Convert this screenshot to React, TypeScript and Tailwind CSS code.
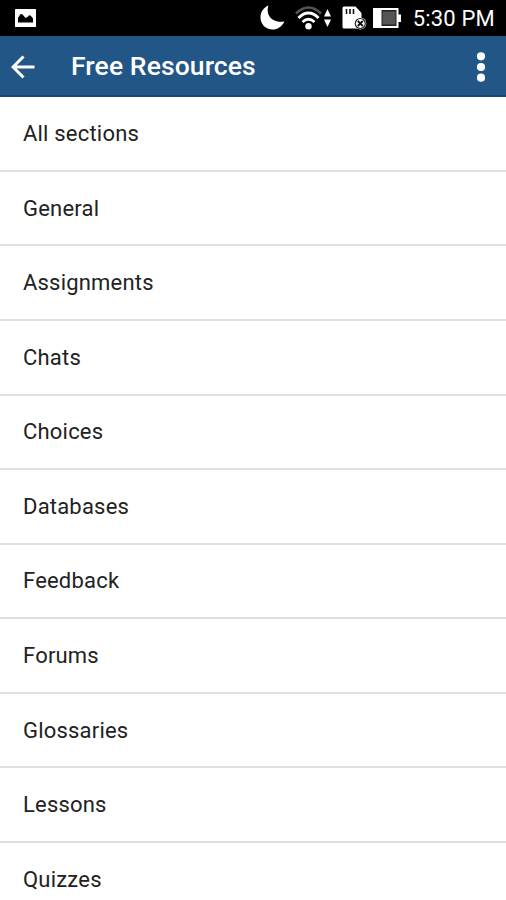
const sections = [
  "All sections",
  "General",
  "Assignments",
  "Chats",
  "Choices",
  "Databases",
  "Feedback",
  "Forums",
  "Glossaries",
  "Lessons",
  "Quizzes",
]

function PictureIcon() {
  return (
    <svg className="h-[18px] w-[21px]" viewBox="0 0 21 18">
      <rect width="21" height="18" rx="0.5" fill="#fff" />
      <path
        fill="#000"
        d="M3 13.5V8.5Q4.2 8 4.5 6.500Q6 4 8 6L10.500 9L13 7.500Q14.500 5.500 16 7L18 9.500V13.500Z"
      />
    </svg>
  )
}

function MoonIcon() {
  return (
    <svg className="-mt-px h-[25px] w-[25px]" viewBox="0 0 25 25">
      <path
        fill="#fff"
        d="M8.5 0.5C5.8 7.5 9.5 18.5 24.5 16.5C21.5 22 17.5 24.5 12.5 24.5C6 24.5 0.5 19.5 0.5 12.5C0.5 7 3.5 2.5 8.5 0.5Z"
      />
    </svg>
  )
}

function WifiIcon() {
  return (
    <svg className="h-[24px] w-[37px]" viewBox="0 0 37 24" fill="none">
      <path d="M1 7.5Q13.5 -4.5 26 7.5" stroke="#555" strokeWidth="2.6" />
      <path d="M3.5 12Q13.5 2 23.5 12" stroke="#fff" strokeWidth="3" />
      <path d="M7.5 16Q13.5 10.5 19.5 16" stroke="#fff" strokeWidth="2.8" />
      <circle cx="13.5" cy="20.300" r="3.200" fill="#fff" />
      <path d="M29 10.5L32.5 3L36 10.5ZM29 13.5H36L32.5 21Z" fill="#fff" />
    </svg>
  )
}

function SdCardIcon() {
  return (
    <svg className="h-[24px] w-[25px]" viewBox="0 0 25 24">
      <path fill="#fff" d="M2 0.5H13.5L19.5 7V22.5H2Q0.5 22.5 0.5 21V2Q0.5 0.5 2 0.5Z" />
      <path d="M4.5 3V8M8 3V8M11.5 3V8" stroke="#111" strokeWidth="1.6" />
      <circle cx="18.3" cy="17.5" r="6" fill="#fff" />
      <circle cx="18.3" cy="17.5" r="5" fill="none" stroke="#222" strokeWidth="1.2" />
      <path d="M15.8 15L20.8 20M20.8 15L15.8 20" stroke="#111" strokeWidth="1.8" />
    </svg>
  )
}

function BatteryIcon() {
  return (
    <svg className="h-[20px] w-[28px]" viewBox="0 0 28 20">
      <rect x="1" y="1" width="23.5" height="18" fill="#222" stroke="#fff" strokeWidth="2" />
      <rect x="9.5" y="3.5" width="13" height="13" fill="#555" />
      <path fill="#fff" d="M1 1H8.5V19H1ZM25 6.5H28V14H25Z" />
    </svg>
  )
}

function StatusBar() {
  return (
    <div className="flex h-9 items-center bg-black pr-[11px] pl-[15px] text-white">
      <PictureIcon />
      <div className="ml-auto flex items-center">
        <MoonIcon />
        <div className="ml-[10px]">
          <WifiIcon />
        </div>
        <div className="-mt-px ml-[10px]">
          <SdCardIcon />
        </div>
        <div className="ml-[6px]">
          <BatteryIcon />
        </div>
      </div>
      <span className="ml-3 text-[22px] tracking-[0.2px]">5:30 PM</span>
    </div>
  )
}

function Header() {
  return (
    <header className="flex h-[61px] items-center border-b-2 border-[#164777] bg-[#225686] pr-5 pl-[11px] text-white">
      <svg className="mt-[2px] h-6 w-6" viewBox="0 0 24 24" fill="none" stroke="#fff" strokeWidth="3">
        <path d="M23.5 12H2.500M12.5 1.500L2 12L12.5 22.500" />
      </svg>
      <h1 className="ml-9 text-[26.5px] font-medium tracking-[0.1px]">Free Resources</h1>
      <svg className="mt-[2px] ml-auto h-[30px] w-[10px]" viewBox="0 0 10 30" fill="#fff">
        <circle cx="5" cy="4.3" r="4.1" />
        <circle cx="5" cy="15" r="4.1" />
        <circle cx="5" cy="25.7" r="4.1" />
      </svg>
    </header>
  )
}

export default function App() {
  return (
    <div className="h-[900px] w-[506px] overflow-hidden bg-white font-['Roboto',sans-serif]">
      <StatusBar />
      <Header />
      <ul className="pt-[0.4px]">
        {sections.map((name) => (
          <li
            key={name}
            className="flex h-[74.55px] items-center border-b-2 border-[#e0e0e0] text-[22px] tracking-[0.2px] text-[#222] pl-[23px]"
          >
            {name}
          </li>
        ))}
      </ul>
    </div>
  )
}
